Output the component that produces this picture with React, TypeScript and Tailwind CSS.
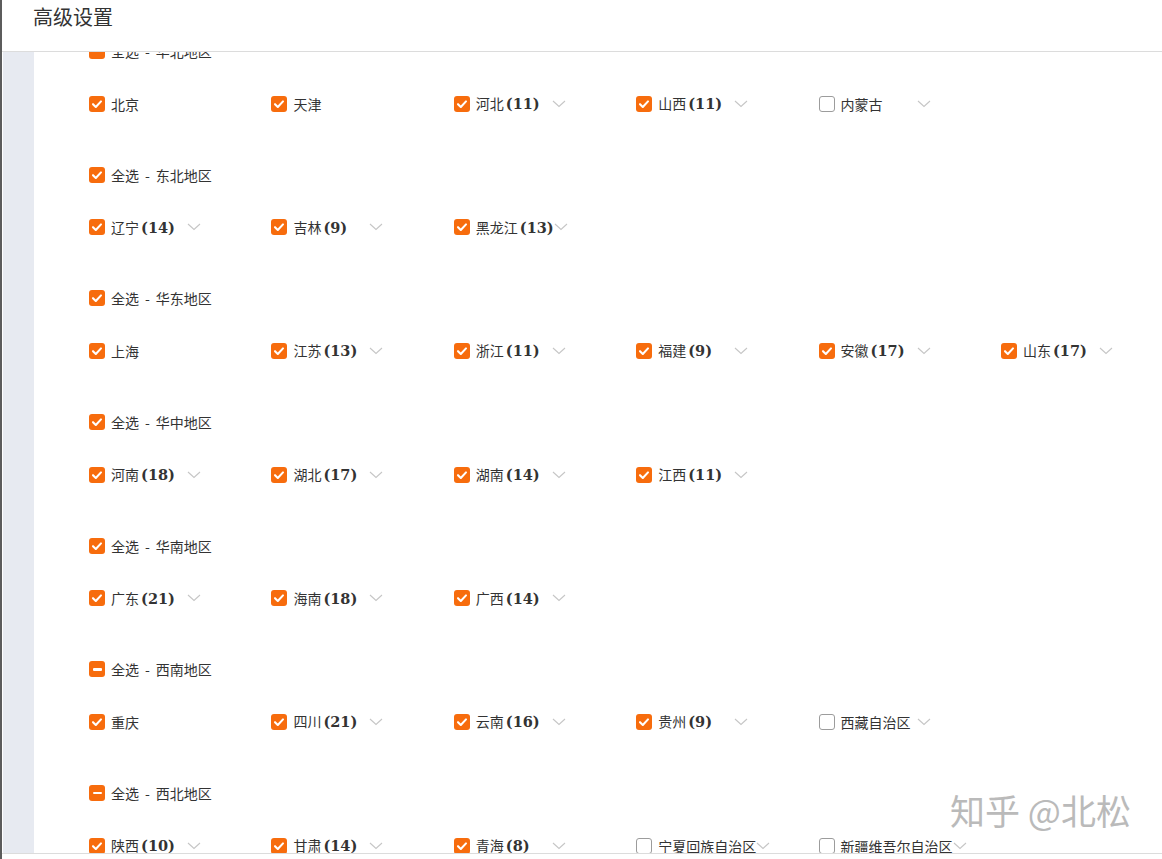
import React from "react";

type CheckState = "on" | "off" | "part";

type Province = {
  name: string;
  count?: number;
  state: CheckState;
  expandable: boolean;
};

type Region = {
  name: string;
  state: CheckState;
  items: Province[];
};

const p = (name: string, count: number | undefined, state: CheckState = "on", expandable = true): Province => ({
  name,
  count,
  state,
  expandable,
});

const regions: Region[] = [
  {
    name: "华北地区",
    state: "part",
    items: [p("北京", undefined, "on", false), p("天津", undefined, "on", false), p("河北", 11), p("山西", 11), p("内蒙古", undefined, "off")],
  },
  {
    name: "东北地区",
    state: "on",
    items: [p("辽宁", 14), p("吉林", 9), p("黑龙江", 13)],
  },
  {
    name: "华东地区",
    state: "on",
    items: [p("上海", undefined, "on", false), p("江苏", 13), p("浙江", 11), p("福建", 9), p("安徽", 17), p("山东", 17)],
  },
  {
    name: "华中地区",
    state: "on",
    items: [p("河南", 18), p("湖北", 17), p("湖南", 14), p("江西", 11)],
  },
  {
    name: "华南地区",
    state: "on",
    items: [p("广东", 21), p("海南", 18), p("广西", 14)],
  },
  {
    name: "西南地区",
    state: "part",
    items: [p("重庆", undefined, "on", false), p("四川", 21), p("云南", 16), p("贵州", 9), p("西藏自治区", undefined, "off")],
  },
  {
    name: "西北地区",
    state: "part",
    items: [p("陕西", 10), p("甘肃", 14), p("青海", 8), p("宁夏回族自治区", undefined, "off"), p("新疆维吾尔自治区", undefined, "off")],
  },
];

function Box({ state }: { state: CheckState }) {
  if (state === "off") {
    return <span className="w-4 h-4 shrink-0 rounded-[3px] border border-[#9c9c9c] bg-white" />;
  }
  return (
    <span className="w-4 h-4 shrink-0 rounded-[3px] bg-[#f76c0d] flex items-center justify-center">
      {state === "on" ? (
        <svg width="16" height="16" viewBox="0 0 16 16" fill="none">
          <path d="M4 8.2 L6.8 11 L12 5.4" stroke="#fff" strokeWidth="2.1" strokeLinecap="round" strokeLinejoin="round" />
        </svg>
      ) : (
        <span className="w-[9px] h-[2.5px] bg-white rounded-[1px]" />
      )}
    </span>
  );
}

function Chevron() {
  return (
    <svg width="14" height="8" viewBox="0 0 14 8" fill="none" className="shrink-0">
      <path d="M1 1 L7 6.5 L13 1" stroke="#c6c6c6" strokeWidth="1.1" />
    </svg>
  );
}

function ProvinceItem({ item }: { item: Province }) {
  return (
    <div className="flex items-center h-5 gap-[6px]">
      <Box state={item.state} />
      <span className="flex items-center">
        <span className="min-w-[76px] whitespace-nowrap text-[14px] leading-5 text-[#333]">
          {item.name}
          {item.count !== undefined && (
            <span className="ml-[2px] font-bold text-[14.5px] text-[#333] [font-family:'DejaVu_Serif',serif]">({item.count})</span>
          )}
        </span>
        {item.expandable && <Chevron />}
      </span>
    </div>
  );
}

function RegionBlock({ region }: { region: Region }) {
  return (
    <div className="flex flex-col pb-[51.2px]">
      <div className="flex items-center h-5 gap-[6px]">
        <Box state={region.state} />
        <span className="text-[14px] leading-5 text-[#333] whitespace-nowrap">
          全选<span className="px-[6px]">-</span>
          {region.name}
        </span>
      </div>
      <div className="mt-[32.5px] grid grid-cols-[repeat(6,182.4px)]">
        {region.items.map((it) => (
          <ProvinceItem key={it.name} item={it} />
        ))}
      </div>
    </div>
  );
}

export default function App() {
  return (
    <div className="relative w-[1162px] h-[859px] bg-white border-l-2 border-[#5c5c5c] flex flex-col overflow-hidden [font-family:'Noto_Sans_CJK_SC','Noto_Sans',sans-serif]">
      <header className="h-[52px] shrink-0 border-b border-[#dcdcdc] flex items-start pl-[31px] pt-[3px]">
        <h1 className="text-[20px] leading-7 text-[#333] font-normal">高级设置</h1>
      </header>
      <div className="h-[802px] shrink-0 flex border-b border-[#dcdcdc]">
        <aside className="w-[31px] ml-px shrink-0 bg-[#e7eaf1]" />
        <main className="flex-1 overflow-hidden pl-[55px]">
          <div className="-mt-[11px]">
            {regions.map((r) => (
              <RegionBlock key={r.name} region={r} />
            ))}
          </div>
        </main>
      </div>
      <div className="flex-1" />
      <div className="absolute left-[948px] top-[788px] text-[35px] leading-[44px] text-[#bababa] [text-shadow:1px_1px_0_#fff,-1px_-1px_0_#fff] pointer-events-none whitespace-nowrap">
        知乎 @北松
      </div>
    </div>
  );
}
